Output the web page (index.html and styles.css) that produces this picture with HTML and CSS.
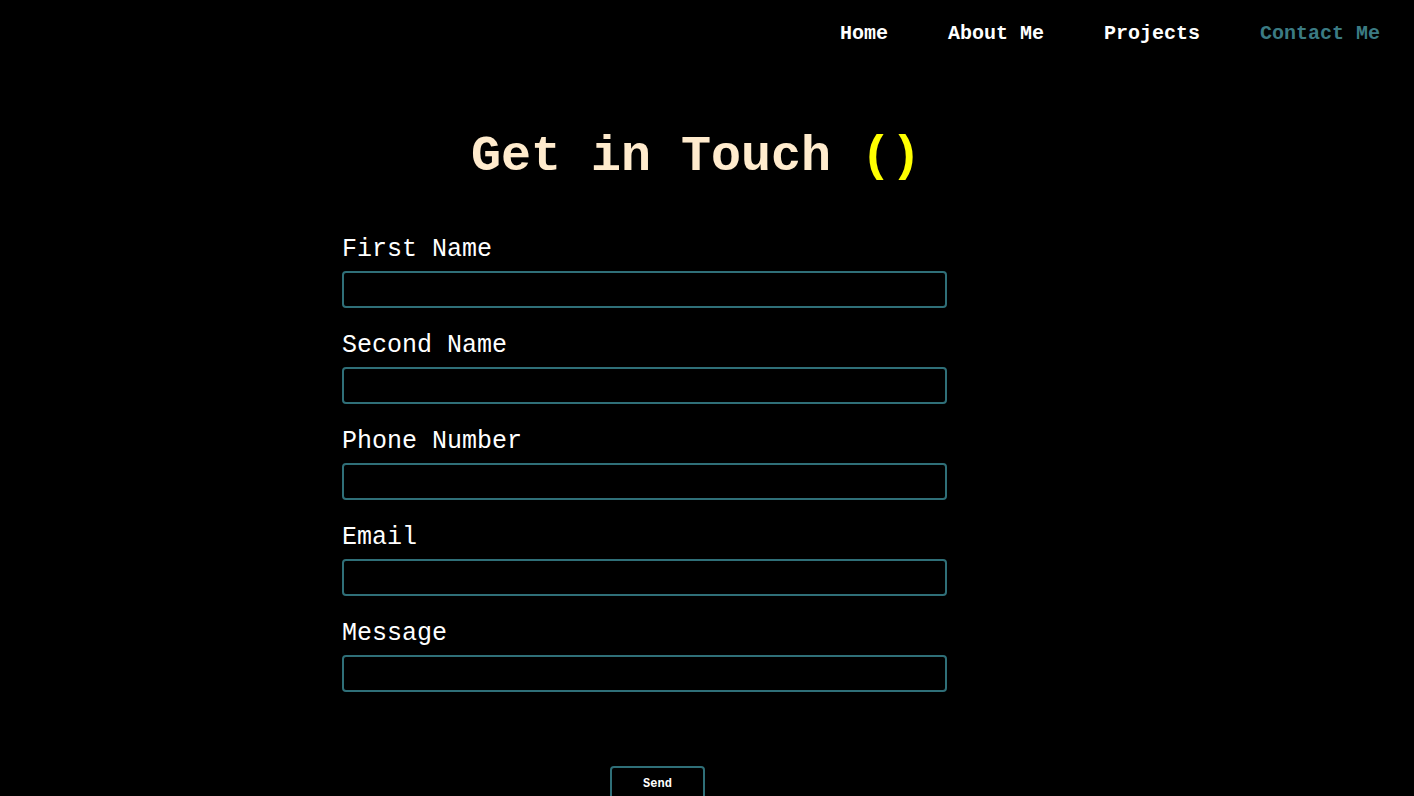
FILE: index.html
```html
<!DOCTYPE html>
<html>
<head>
<meta charset="utf-8">
<link rel="stylesheet" href="styles.css">
</head>
<body>
<nav class="nav">
  <a class="nav-link" href="#">Home</a>
  <a class="nav-link" href="#">About Me</a>
  <a class="nav-link" href="#">Projects</a>
  <a class="nav-link active" href="#">Contact Me</a>
</nav>
<main class="main">
  <h1 class="title">Get in Touch <span class="parens">()</span></h1>
  <form class="form">
    <div class="field">
      <label class="label">First Name</label>
      <input class="input" type="text">
    </div>
    <div class="field">
      <label class="label">Second Name</label>
      <input class="input" type="text">
    </div>
    <div class="field">
      <label class="label">Phone Number</label>
      <input class="input" type="text">
    </div>
    <div class="field">
      <label class="label">Email</label>
      <input class="input" type="text">
    </div>
    <div class="field">
      <label class="label">Message</label>
      <input class="input" type="text">
    </div>
    <div class="actions">
      <button class="send" type="button">Send</button>
    </div>
  </form>
</main>
</body>
</html>
```
FILE: styles.css
```css
html, body {
  margin: 0;
  padding: 0;
  background: #000;
  height: 100%;
  overflow: hidden;
}
body {
  font-family: "Liberation Mono", "Courier New", monospace;
  color: #fff;
}
.nav {
  display: flex;
  justify-content: flex-end;
  gap: 60px;
  padding: 22px 34px 0 0;
  height: 24px;
}
.nav-link {
  color: #fff;
  text-decoration: none;
  font-size: 20px;
  font-weight: bold;
  line-height: 24px;
}
.nav-link.active {
  color: #3b7b83;
}
.main {
  display: flex;
  flex-direction: column;
}
.title {
  margin: 81px 0 0 0;
  padding-right: 22px;
  text-align: center;
  font-size: 50px;
  line-height: 60px;
  font-weight: bold;
  color: #ffebcd;
}
.parens {
  color: #ffff00;
}
.form {
  margin: 47px 0 0 342px;
  width: 605px;
  display: flex;
  flex-direction: column;
  gap: 22px;
}
.field {
  display: flex;
  flex-direction: column;
  gap: 6px;
}
.label {
  font-size: 25px;
  line-height: 31px;
  color: #fff;
}
.input {
  box-sizing: border-box;
  height: 37px;
  width: 605px;
  background: #000;
  border: 2px solid #2f6f78;
  border-radius: 4px;
  color: #fff;
  font-family: inherit;
  margin: 0;
}
.actions {
  display: flex;
  padding: 52px 0 0 268px;
}
.send {
  box-sizing: border-box;
  width: 95px;
  height: 36px;
  background: #000;
  border: 2px solid #2f6f78;
  border-radius: 4px;
  color: #fff;
  font-family: "Liberation Mono", "Courier New", monospace;
  font-weight: bold;
  font-size: 12px;
  padding: 0;
}
```
